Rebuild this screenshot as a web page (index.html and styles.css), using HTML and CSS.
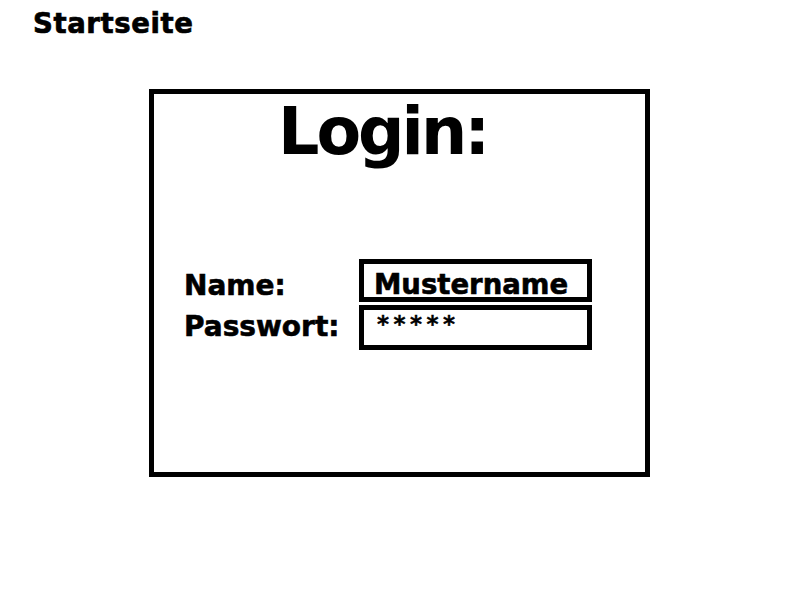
FILE: index.html
```html
<!DOCTYPE html>
<html lang="de">
<head>
<meta charset="utf-8">
<title>Startseite</title>
<link rel="stylesheet" href="styles.css">
</head>
<body>
<h1 class="page-title">Startseite</h1>
<section class="login-box">
  <h2 class="login-title">Login:</h2>
  <form class="login-form">
    <label class="field-label label-name" for="name">Name:</label>
    <div class="field field-name" id="name">Mustername</div>
    <label class="field-label label-pw" for="pw">Passwort:</label>
    <div class="field field-pw" id="pw">*****</div>
  </form>
</section>
</body>
</html>
```
FILE: styles.css
```css
html, body {
  margin: 0;
  padding: 0;
  background: #ffffff;
  color: #000000;
  font-family: "DejaVu Sans", Verdana, sans-serif;
  font-weight: bold;
}

.page-title {
  margin: 10px 0 0 33px;
  font-size: 27.5px;
  line-height: 27px;
  letter-spacing: 0.6px;
  font-weight: bold;
  -webkit-text-stroke: 0.7px #000;
}

.login-box {
  box-sizing: border-box;
  width: 501px;
  height: 388px;
  margin: 52px 0 0 149px;
  border: 5px solid #000;
}

.login-title {
  margin: 5px 0 0 124px;
  font-size: 65px;
  line-height: 65px;
  letter-spacing: -3px;
  font-weight: bold;
}

.login-form {
  display: grid;
  grid-template-columns: 175px 233px;
  grid-template-rows: 43px 45px;
  row-gap: 3px;
  margin: 95px 0 0 30px;
}

.field-label {
  font-size: 28px;
  line-height: 28px;
  -webkit-text-stroke: 0.6px #000;
}

.label-name {
  padding-top: 13px;
}

.label-pw {
  padding-top: 8px;
}

.field {
  box-sizing: border-box;
  border: 5px solid #000;
  padding-left: 10px;
}

.field-name {
  font-size: 27.5px;
  line-height: 27px;
  letter-spacing: 0;
  padding-top: 7px;
  -webkit-text-stroke: 0.6px #000;
}

.field-pw {
  font-size: 23px;
  line-height: 23px;
  letter-spacing: 4.5px;
  padding-left: 13px;
  padding-top: 3px;
  -webkit-text-stroke: 0.4px #000;
}
```
